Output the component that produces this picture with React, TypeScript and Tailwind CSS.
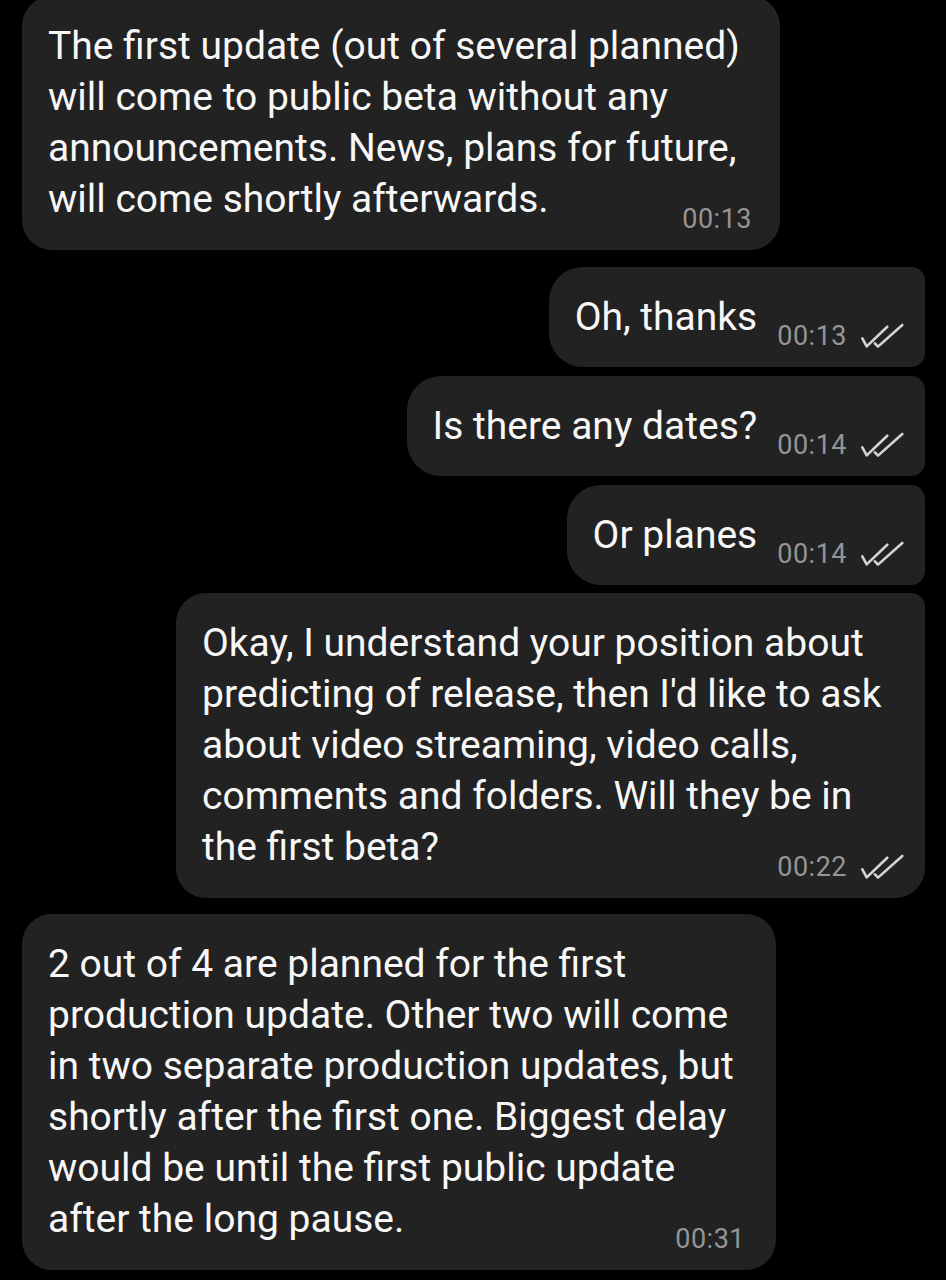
const FONT = "font-['Roboto','Noto_Sans',sans-serif]";

function Checks() {
  return (
    <svg width="44" height="26" viewBox="0 0 44 26" fill="none" className="shrink-0">
      <path d="M2.3 15.3 L6.7 23.4 L27.3 3.7" stroke="#d4d4d4" strokeWidth="2.6" strokeLinecap="round" strokeLinejoin="round" />
      <path d="M14.9 20.3 L18 23.6 L42.3 2" stroke="#d4d4d4" strokeWidth="2.6" strokeLinecap="round" strokeLinejoin="round" />
    </svg>
  );
}

function Meta({ time, read }: { time: string; read?: boolean }) {
  return (
    <div className="flex h-[26px] items-center gap-[13px] text-[27px] leading-[26px] tracking-[0.5px] text-[#959595]">
      <span>{time}</span>
      {read && <Checks />}
    </div>
  );
}

function ShortOut({ text, time, className }: { text: string; time: string; className: string }) {
  return (
    <div className={`flex items-end self-end bg-[#222222] pt-[25px] pb-[18px] pl-[26px] pr-[21px] ${className}`}>
      <span className="mb-[6px] mr-[20px] text-[39px] leading-[51px] text-[#f7f7f7]">{text}</span>
      <Meta time={time} read />
    </div>
  );
}

function LongBubble({
  lines,
  time,
  read,
  className,
}: {
  lines: string[];
  time: string;
  read?: boolean;
  className: string;
}) {
  return (
    <div className={`flex flex-col bg-[#222222] pt-[25px] pb-[18px] pl-[26px] ${className}`}>
      <div className="mb-[7px] text-[39px] leading-[51px] text-[#f7f7f7]">
        {lines.map((l) => (
          <div key={l} className="whitespace-nowrap">
            {l}
          </div>
        ))}
      </div>
      <div className="-mt-[26px] self-end">
        <Meta time={time} read={read} />
      </div>
    </div>
  );
}

export default function App() {
  return (
    <div className={`min-h-screen w-full bg-black ${FONT}`}>
      <div className="flex flex-col pr-[21px] pl-[22px]">
        <LongBubble
          className="-mt-1 w-[758px] self-start rounded-[30px] pr-[28px]"
          time="00:13"
          lines={[
            "The first update (out of several planned)",
            "will come to public beta without any",
            "announcements. News, plans for future,",
            "will come shortly afterwards.",
          ]}
        />
        <ShortOut
          text="Oh, thanks"
          time="00:13"
          className="mt-[17px] rounded-l-[34px] rounded-r-[14px]"
        />
        <ShortOut
          text="Is there any dates?"
          time="00:14"
          className="mt-[9px] rounded-l-[34px] rounded-r-[14px]"
        />
        <ShortOut
          text="Or planes"
          time="00:14"
          className="mt-[9px] rounded-l-[34px] rounded-r-[14px]"
        />
        <LongBubble
          className="mt-[8px] w-[749px] self-end rounded-l-[30px] rounded-tr-[14px] rounded-br-[30px] pr-[21px]"
          time="00:22"
          read
          lines={[
            "Okay, I understand your position about",
            "predicting of release, then I'd like to ask",
            "about video streaming, video calls,",
            "comments and folders. Will they be in",
            "the first beta?",
          ]}
        />
        <LongBubble
          className="mt-4 w-[754px] self-start rounded-[30px] pr-[31px]"
          time="00:31"
          lines={[
            "2 out of 4 are planned for the first",
            "production update. Other two will come",
            "in two separate production updates, but",
            "shortly after the first one. Biggest delay",
            "would be until the first public update",
            "after the long pause.",
          ]}
        />
      </div>
    </div>
  );
}
